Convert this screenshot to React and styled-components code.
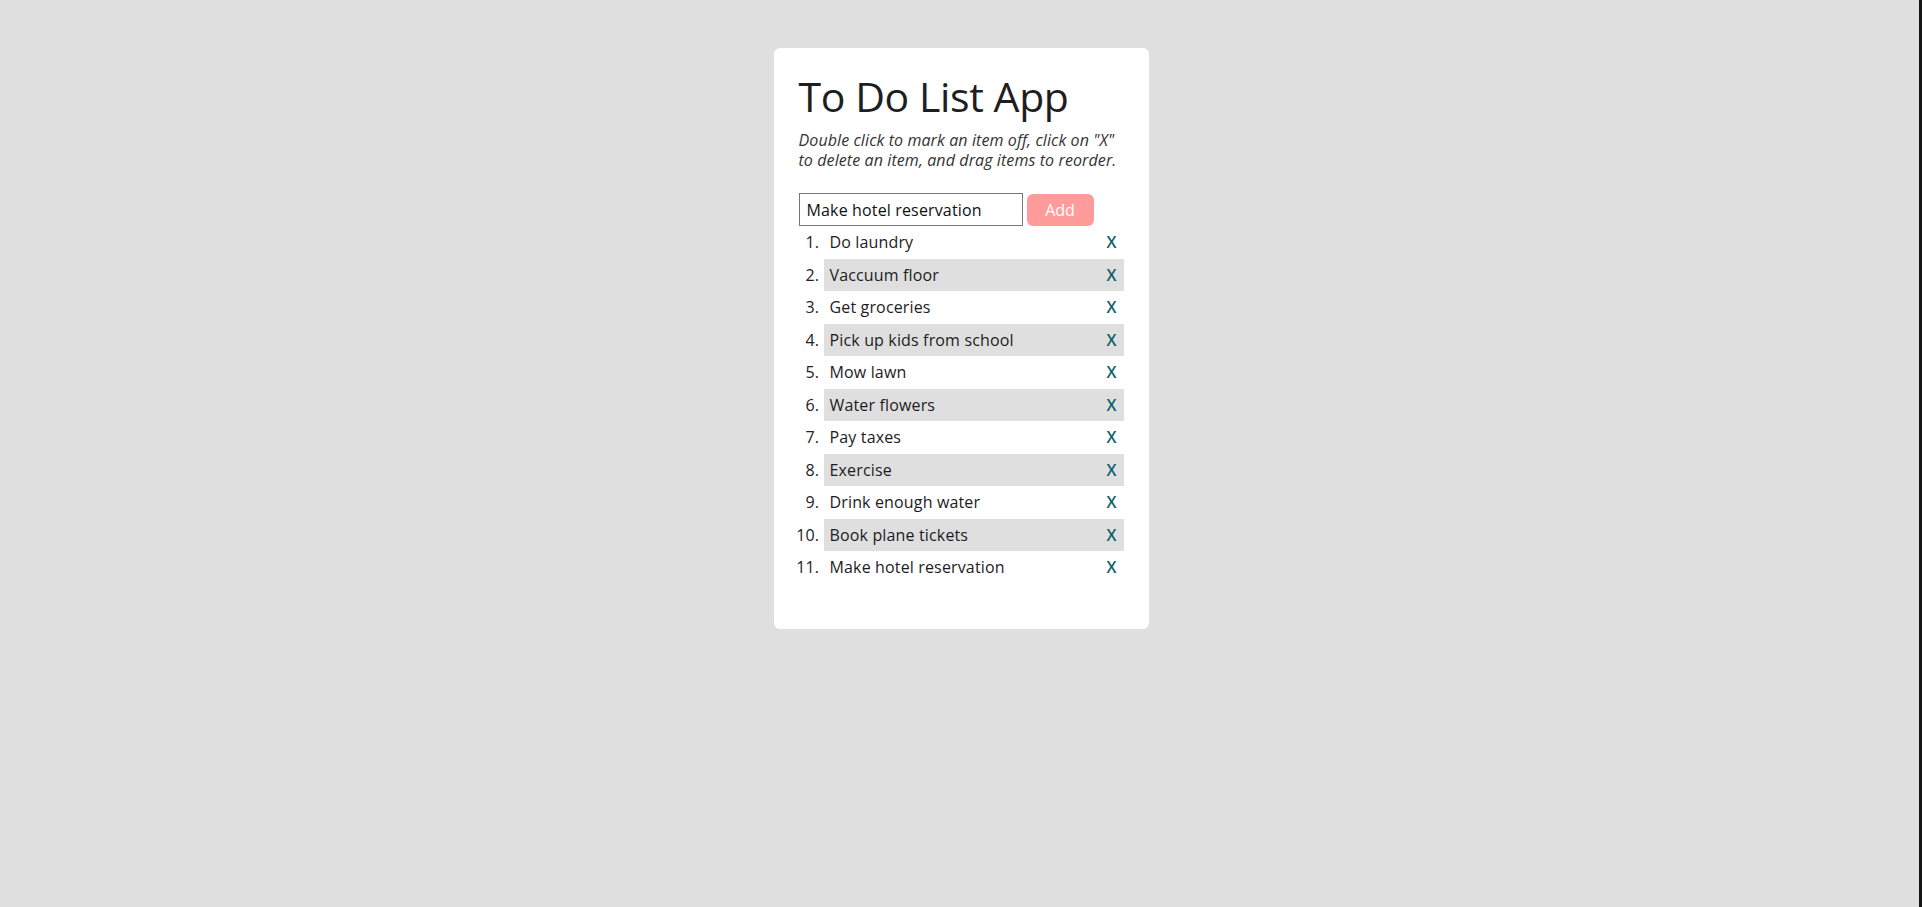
import React, { useState } from "react";
import styled, { createGlobalStyle } from "styled-components";

const GlobalStyle = createGlobalStyle`
  html, body { margin: 0; padding: 0; }
  body {
    background: #dfdfdf;
    font-family: "Open Sans", "Noto Sans", sans-serif;
    color: #222;
  }
`;

const Page = styled.div`
  min-height: 100vh;
  padding-top: 48px;
  box-sizing: border-box;
`;

const Edge = styled.div`
  position: fixed;
  top: 0;
  right: 0;
  bottom: 0;
  width: 3px;
  background: #151515;
`;

const Card = styled.section`
  box-sizing: border-box;
  width: 375px;
  margin: 0 auto;
  background: #fff;
  border-radius: 6px;
  padding: 19px 25px 25px;
`;

const Title = styled.h1`
  margin: 0;
  font-size: 41px;
  letter-spacing: -0.4px;
  font-weight: 400;
  line-height: 58px;
  color: #1e1e22;
`;

const Hint = styled.p`
  margin: 5px 0 0;
  font-size: 16px;
  font-style: italic;
  letter-spacing: 0.1px;
  line-height: 20px;
  color: #333;
`;

const Form = styled.form`
  display: flex;
  align-items: center;
  gap: 4px;
  margin-top: 23px;
`;

const Input = styled.input`
  box-sizing: border-box;
  width: 224px;
  height: 33px;
  padding: 0 7px;
  border: 1px solid #767676;
  border-radius: 0;
  font-family: inherit;
  font-size: 16px;
  letter-spacing: 0.15px;
  color: #111;
  outline: none;
`;

const AddButton = styled.button`
  box-sizing: border-box;
  width: 67px;
  height: 32px;
  border: none;
  border-radius: 6px;
  background: #ff9b9b;
  color: #fff;
  font-family: inherit;
  font-size: 16px;
  cursor: pointer;
`;

const List = styled.ol`
  margin: 0 0 20px;
  padding-left: 25px;
`;

const Item = styled.li`
  display: list-item;
  padding: 5px 7px 5px 6px;
  font-size: 16px;
  line-height: 22.5px;
  letter-spacing: 0.15px;
  background: ${(p) => (p.$shaded ? "#dfdfdf" : "transparent")};
  cursor: grab;
`;

const ItemText = styled.span`
  color: #1c1c24;
  text-decoration: ${(p) => (p.$done ? "line-through" : "none")};
`;

const Remove = styled.button`
  float: right;
  border: none;
  background: none;
  padding: 0;
  font-family: inherit;
  font-size: 16px;
  line-height: 22.5px;
  font-weight: 600;
  color: #0f5f6b;
  cursor: pointer;
`;

const initial = [
  "Do laundry",
  "Vaccuum floor",
  "Get groceries",
  "Pick up kids from school",
  "Mow lawn",
  "Water flowers",
  "Pay taxes",
  "Exercise",
  "Drink enough water",
  "Book plane tickets",
  "Make hotel reservation",
];

export default function App() {
  const [items, setItems] = useState(initial.map((t) => ({ text: t, done: false })));
  const [value, setValue] = useState("Make hotel reservation");

  const add = (e) => {
    e.preventDefault();
    if (!value.trim()) return;
    setItems([...items, { text: value, done: false }]);
  };

  return (
    <Page>
      <GlobalStyle />
      <Card>
        <Title>To Do List App</Title>
        <Hint>
          Double click to mark an item off, click on "X" to delete an item, and drag items to reorder.
        </Hint>
        <Form onSubmit={add}>
          <Input value={value} onChange={(e) => setValue(e.target.value)} />
          <AddButton type="submit">Add</AddButton>
        </Form>
        <List>
          {items.map((it, i) => (
            <Item
              key={i}
              $shaded={i % 2 === 1}
              onDoubleClick={() =>
                setItems(items.map((x, j) => (j === i ? { ...x, done: !x.done } : x)))
              }
            >
              <ItemText $done={it.done}>{it.text}</ItemText>
              <Remove onClick={() => setItems(items.filter((_, j) => j !== i))}>X</Remove>
            </Item>
          ))}
        </List>
      </Card>
      <Edge />
    </Page>
  );
}
